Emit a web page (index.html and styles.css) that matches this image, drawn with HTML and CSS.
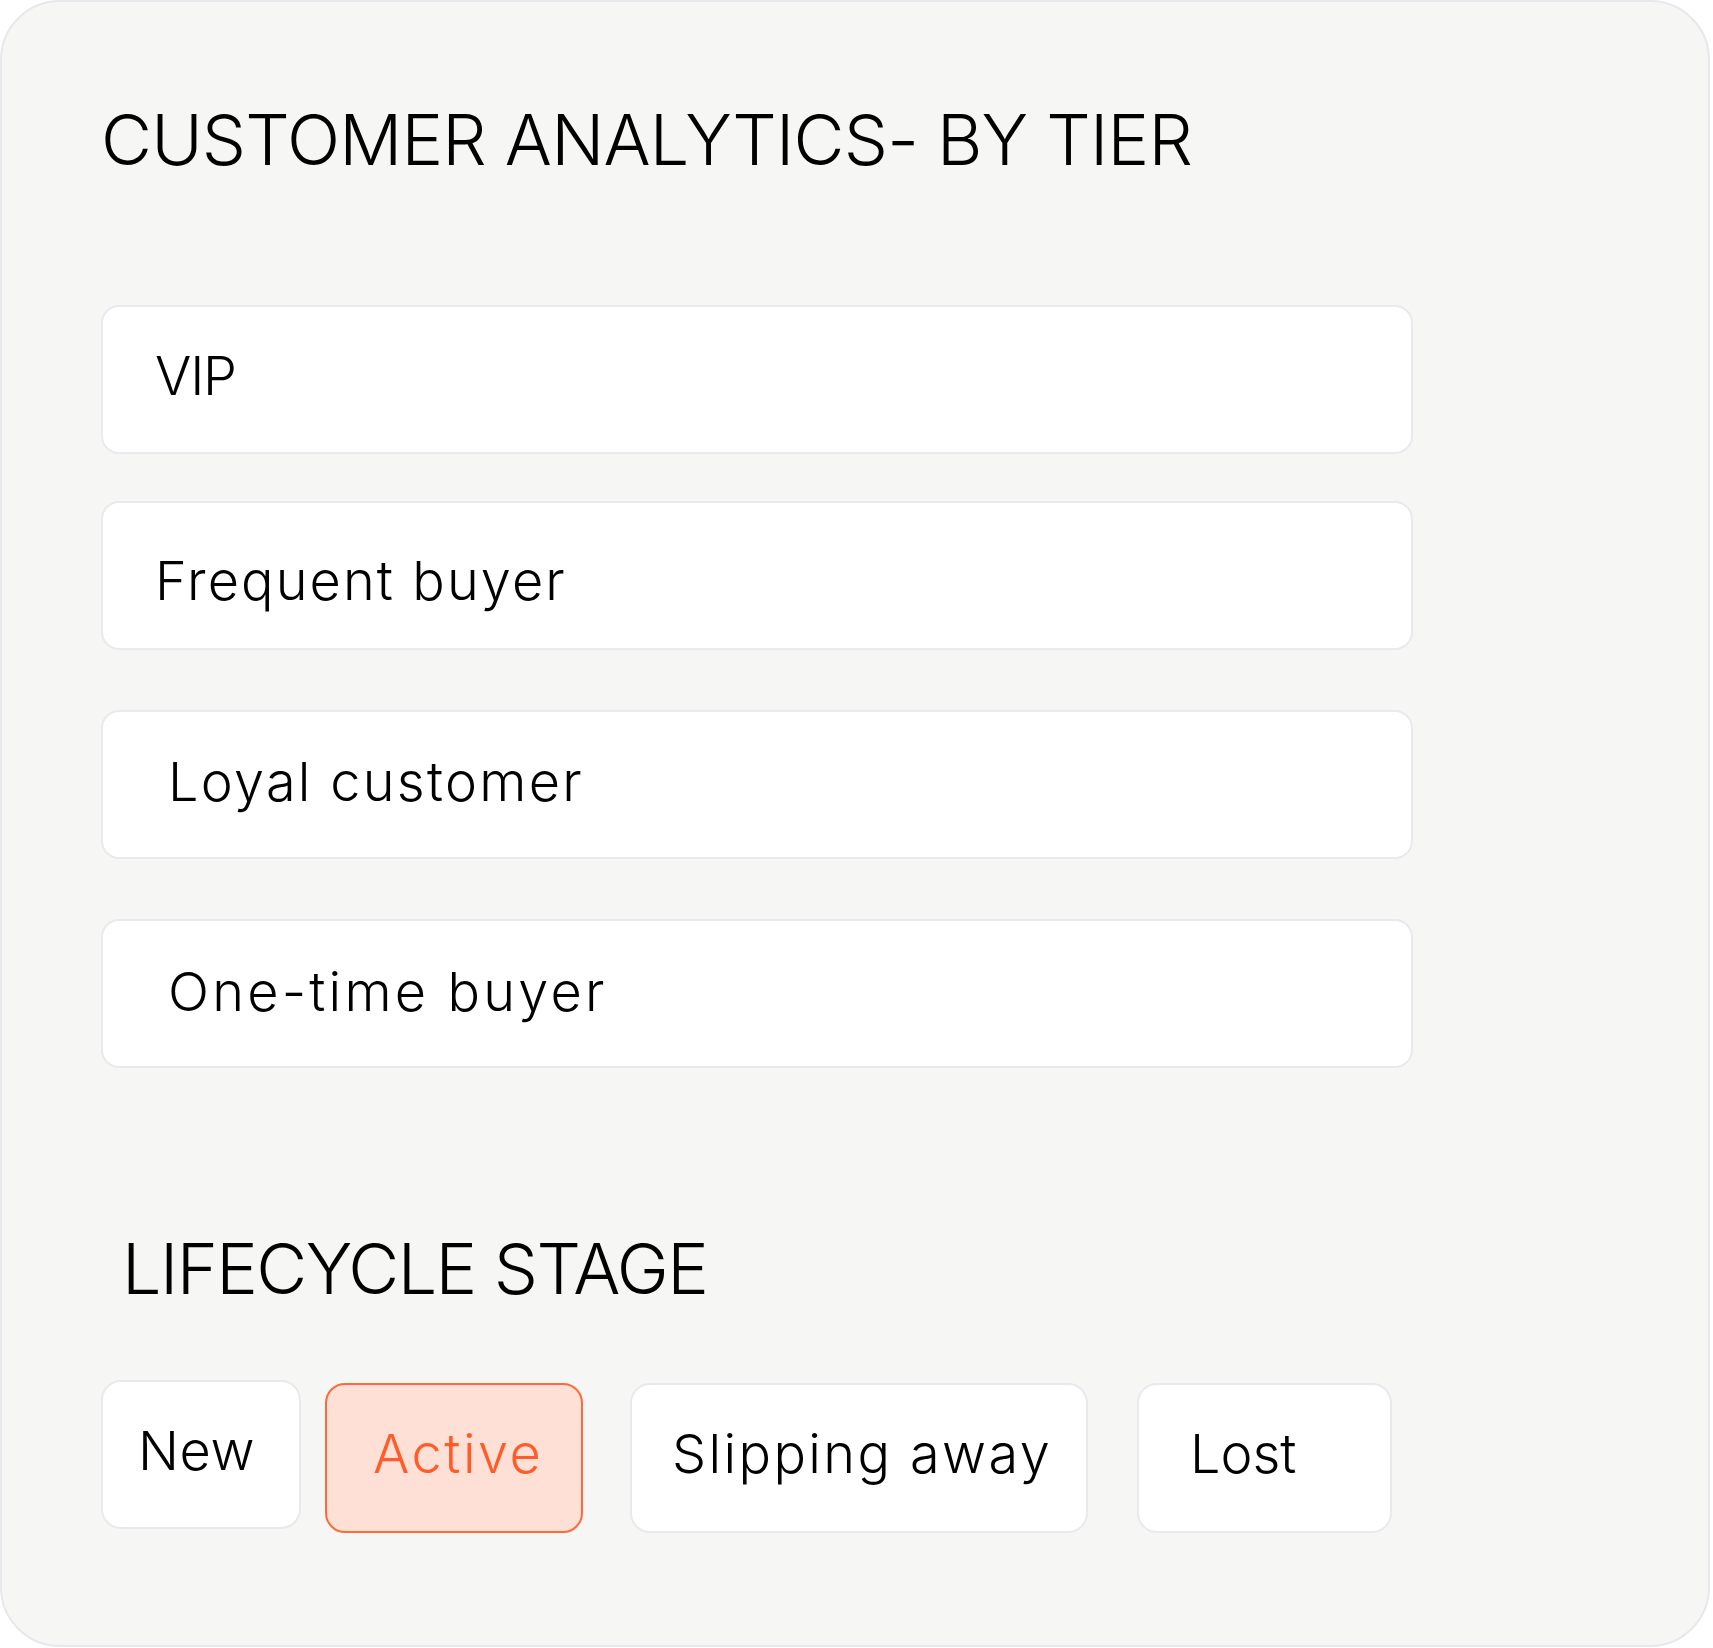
FILE: index.html
```html
<!DOCTYPE html>
<html lang="en">
<head>
<meta charset="utf-8">
<title>Customer Analytics</title>
<link rel="stylesheet" href="styles.css">
</head>
<body>
<section class="card">
  <h1 class="heading">CUSTOMER ANALYTICS- BY TIER</h1>
  <ul class="tiers">
    <li class="tier tier--vip">VIP</li>
    <li class="tier tier--freq">Frequent buyer</li>
    <li class="tier tier--loyal">Loyal customer</li>
    <li class="tier tier--once">One-time buyer</li>
  </ul>
  <h2 class="heading heading--stage">LIFECYCLE STAGE</h2>
  <div class="chips">
    <span class="chip chip--new">New</span>
    <span class="chip chip--active">Active</span>
    <span class="chip chip--slip">Slipping away</span>
    <span class="chip chip--lost">Lost</span>
  </div>
</section>
</body>
</html>
```
FILE: styles.css
```css
* { box-sizing: border-box; }
html, body { margin: 0; padding: 0; background: #ffffff; }
body {
  font-family: Inter, "Open Sans", "Liberation Sans", sans-serif;
  color: #000;
  font-weight: 350;
}
.card {
  width: 1710px;
  height: 1647px;
  background: #f6f6f4;
  border: 2px solid #e8e8ec;
  border-radius: 60px;
  padding: 103px 0 0 99px;
}
.heading {
  margin: 0;
  font-size: 70px;
  line-height: 70px;
  font-weight: 350;
  letter-spacing: -0.8px;
  white-space: nowrap;
}
.heading--stage {
  margin: 166px 0 0 21px;
  letter-spacing: -1.6px;
}
.tiers {
  list-style: none;
  margin: 130px 0 0 0;
  padding: 0;
  width: 1312px;
}
.tier {
  height: 149px;
  background: #fff;
  border: 2px solid #e9e9ee;
  border-radius: 18px;
  font-size: 54px;
  line-height: 54px;
  letter-spacing: 2.3px;
  white-space: nowrap;
}
.tier + .tier { margin-top: 60px; }
.tier--vip { padding: 42px 0 0 52px; letter-spacing: -1.2px; }
.tier--freq { margin-top: 47px !important; padding: 51px 0 0 52px; letter-spacing: 2.1px; }
.tier--loyal { padding: 43px 0 0 65px; }
.tier--once { padding: 44px 0 0 65px; letter-spacing: 3.2px; }
.chips {
  display: flex;
  align-items: flex-start;
  gap: 24px;
  margin-top: 76px;
}
.chip {
  display: block;
  height: 150px;
  margin-top: 3px;
  background: #fff;
  border: 2px solid #e9e9ee;
  border-radius: 20px;
  font-size: 54px;
  line-height: 54px;
  padding-top: 42px;
  white-space: nowrap;
}
.chip--new { width: 200px; height: 149px; margin-top: 0; padding-left: 35px; letter-spacing: 0.6px; }
.chip--active {
  width: 258px;
  padding-left: 46px;
  background: #fee0d6;
  border-color: #ff6a3a;
  color: #ff5c28;
  letter-spacing: 2.5px;
}
.chip--slip { width: 458px; margin-left: 23px; padding-left: 40px; letter-spacing: 2.4px; }
.chip--lost { width: 255px; margin-left: 25px; padding-left: 51px; }
```
